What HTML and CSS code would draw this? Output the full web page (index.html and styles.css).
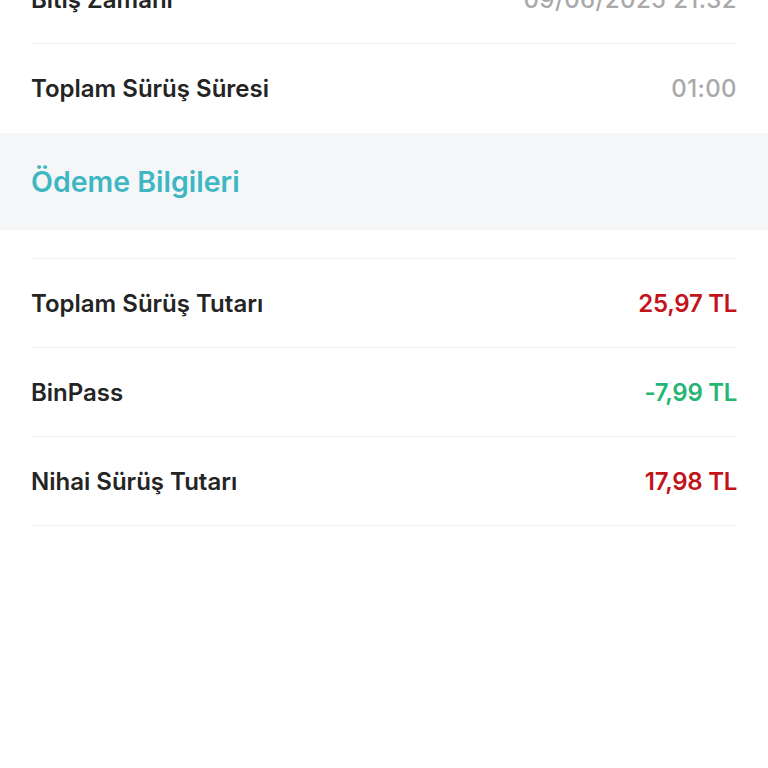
FILE: index.html
```html
<!DOCTYPE html>
<html lang="tr">
<head>
  <meta charset="UTF-8" />
  <meta name="viewport" content="width=device-width, initial-scale=1.0" />
  <title>Sürüş Detayı</title>
  <link rel="stylesheet" href="styles.css">
</head>
<body>

<div id="detailPage">
  <div class="infoList firstList">
    <div class="infoRow">
      <span class="label">Bitiş Zamanı</span>
      <span class="value muted">09/06/2025 21:32</span>
    </div>
    <div class="infoRow noBorder">
      <span class="label">Toplam Sürüş Süresi</span>
      <span class="value muted">01:00</span>
    </div>
  </div>

  <div class="sectionHeader">Ödeme Bilgileri</div>

  <div class="infoList paymentList">
    <div class="infoRow">
      <span class="label">Toplam Sürüş Tutarı</span>
      <span class="value red">25,97 TL</span>
    </div>
    <div class="infoRow">
      <span class="label">BinPass</span>
      <span class="value green">-7,99 TL</span>
    </div>
    <div class="infoRow">
      <span class="label">Nihai Sürüş Tutarı</span>
      <span class="value red">17,98 TL</span>
    </div>
  </div>
</div>

</body>
</html>
```

FILE: styles.css
```css
body {
  margin: 0;
  font-family: "Inter", "Noto Sans", sans-serif;
  background-color: #fff;
  overflow: hidden;
}
#detailPage {
  width: 100%;
}
.infoList {
  padding: 0 31px;
}
.firstList {
  margin-top: -45px;
}
.paymentList {
  padding-top: 28px;
}
.paymentList .infoRow {
  border-top: 1px solid #f2f2f2;
}
.paymentList .infoRow:last-child {
  border-bottom: 1px solid #f2f2f2;
}
.infoRow {
  display: flex;
  justify-content: space-between;
  align-items: center;
  height: 88px;
}
.firstList .infoRow {
  border-bottom: 1px solid #f2f2f2;
}
.firstList .infoRow.noBorder {
  border-bottom: none;
  height: 89px;
}
.label {
  font-size: 24px;
  font-weight: 600;
  color: #242424;
}
.value {
  font-size: 24px;
  font-weight: 600;
  letter-spacing: -0.3px;
}
.muted { color: #a9a9a9; font-weight: 500; letter-spacing: 0.4px; }
.red { color: #c3131b; }
.green { color: #27b574; }
.sectionHeader {
  background-color: #f5f6f8;
  height: 97px;
  display: flex;
  align-items: center;
  padding: 0 31px;
  font-size: 28.5px;
  font-weight: 600;
  color: #3eb7c3;
}
```
